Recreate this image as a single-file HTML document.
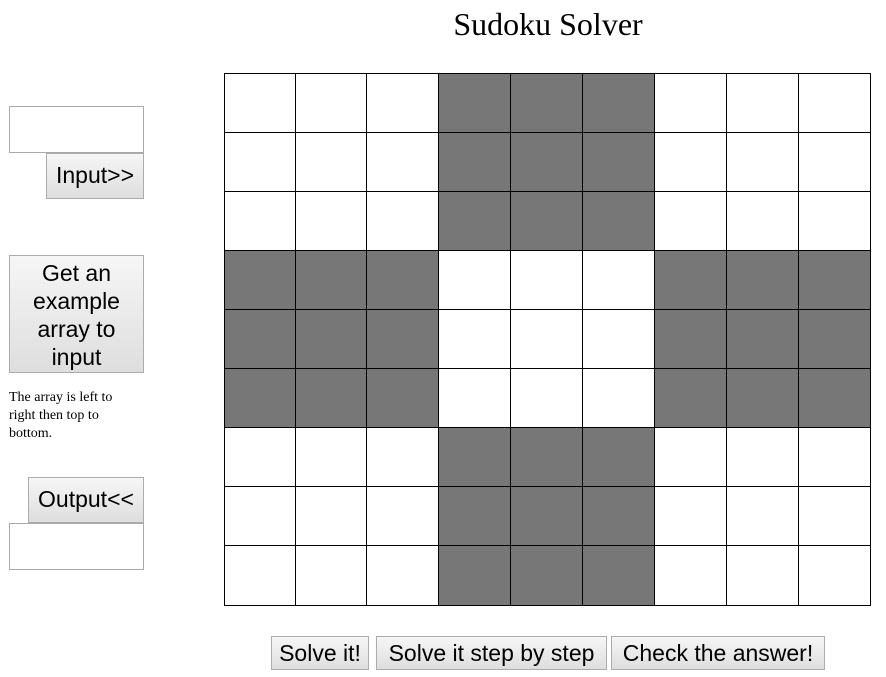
<!DOCTYPE html>
<html><head><style>
body{margin:0;width:886px;height:677px;background:#fff;position:relative;overflow:hidden;font-family:"Liberation Sans",Arial,sans-serif}
.a{position:absolute;box-sizing:border-box}
.btn{background:linear-gradient(#f6f6f6,#dedede);border:1px solid #acacac;font-size:23px;color:#000;text-align:center;line-height:1.2;white-space:nowrap}
.tb{border:1px solid #a9a9a9;background:#fff}
h1{position:absolute;margin:0;left:0;width:1096px;text-align:center;top:6px;font:normal 32px "Liberation Serif",serif}
#g{position:absolute;left:224px;top:73px;background:#000;padding:1px;display:grid;grid-template-columns:70px 70px 71px 71px 71px 71px 71px 71px 71px;grid-template-rows:58px 58px 58px 58px 58px 58px 58px 58px 59px;gap:1px}
#g div{background:#fff}
#g div.d{background:#777}
</style></head><body>
<h1>Sudoku Solver</h1>
<div class="a tb" style="left:9px;top:106px;width:135px;height:47px"></div>
<div class="a btn" style="left:46px;top:153px;width:98px;height:46px;padding-top:8px">Input&gt;&gt;</div>
<div class="a btn" style="left:9px;top:255px;width:135px;height:118px;padding-top:3px;line-height:28px;white-space:normal"><div>Get an</div><div>example</div><div>array to</div><div>input</div></div>
<div class="a" style="left:9px;top:389px;width:126px;font:14px/18px 'Liberation Serif',serif">The array is left to right then top to bottom.</div>
<div class="a btn" style="left:28px;top:477px;width:116px;height:46px;padding-top:8px">Output&lt;&lt;</div>
<div class="a tb" style="left:9px;top:523px;width:135px;height:47px"></div>
<div id="g"></div>
<div class="a btn" style="left:271px;top:636px;width:98px;height:34px;padding-top:3px">Solve it!</div>
<div class="a btn" style="left:376px;top:636px;width:231px;height:34px;padding-top:3px">Solve it step by step</div>
<div class="a btn" style="left:611px;top:636px;width:214px;height:34px;padding-top:3px">Check the answer!</div>
<script>
var g=document.getElementById('g');
for(var r=0;r<9;r++)for(var c=0;c<9;c++){var d=document.createElement('div');var br=Math.floor(r/3),bc=Math.floor(c/3);if((br+bc)%2==1)d.className='d';g.appendChild(d);}
</script>
</body></html>
